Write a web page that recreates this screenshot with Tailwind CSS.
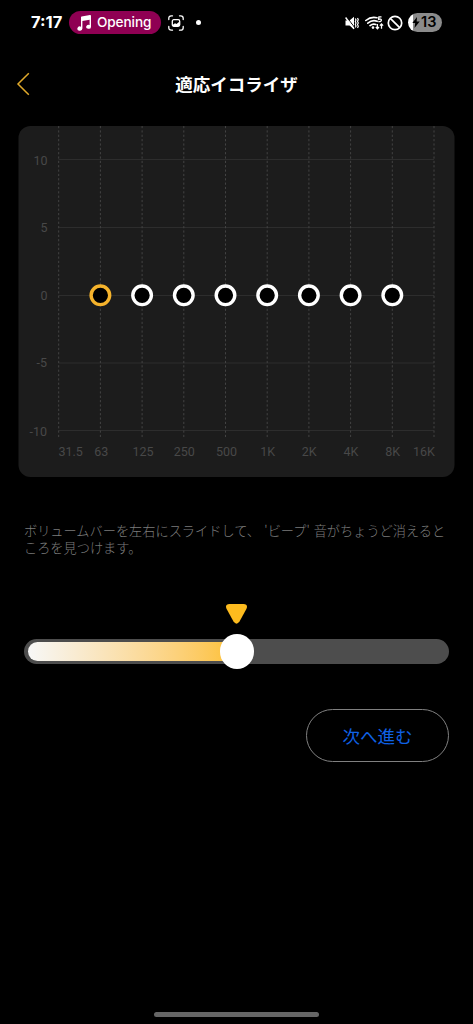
<!DOCTYPE html>
<html lang="ja">
<head>
<meta charset="utf-8">
<meta name="viewport" content="width=device-width, initial-scale=1">
<title>適応イコライザ</title>
<script src="https://cdn.jsdelivr.net/npm/@tailwindcss/browser@4"></script>
</head>
<body class="bg-black">
<div class="flex h-[1024px] w-[473px] flex-col overflow-hidden bg-black font-['Roboto','Noto_Sans_CJK_JP',sans-serif] text-white">

  <!-- Status bar -->
  <div class="flex h-[45px] shrink-0 items-center pl-[31px] pr-[31px]">
    <span class="w-[38px] whitespace-nowrap font-['Inter',sans-serif] text-[16.500px] font-bold leading-none">7:17</span>
    <div class="flex h-[23px] w-[92px] items-center rounded-full bg-[#8f0053] pl-[8px]">
      <svg class="h-[16px] w-[15px] shrink-0" viewBox="0 0 15 16" fill="#fff"><path d="M4 2.200Q4 1.600 4.600 1.500L13 .1Q14 0 14 .9V11.900a2.400 2 0 1 1-1.400-1.900V4.800L5.400 6V13.600a2.500 2.100 0 1 1-1.400-1.900Z"/></svg>
      <span class="ml-[5px] whitespace-nowrap font-['Inter',sans-serif] text-[13.600px] font-medium leading-none tracking-[-0.1px]">Opening</span>
    </div>
    <svg class="ml-[7px] h-[16px] w-[16px] shrink-0" viewBox="0 0 16 16" fill="none" stroke="#fff" stroke-width="1.300" stroke-linecap="round"><path d="M.8 4.500V3.300Q.8.8 3.300.8H4.500M11.500.8h1.200Q15.200.8 15.200 3.300v1.200M15.200 11.500v1.200q0 2.500-2.500 2.500h-1.200M4.500 15.200H3.300Q.8 15.200.8 12.700v-1.200"/><rect x="4.300" y="4.700" width="7.400" height="6.600" rx="1.500"/><path d="M4.500 10 7 8.300 8.500 9l2.800-2.200V11H4.700Z" fill="#fff" stroke="none"/></svg>
    <span class="ml-[12px] size-[5px] rounded-full bg-white"></span>
    <div class="ml-auto flex items-center">
      <svg class="h-[14px] w-[14px]" viewBox="0 0 14 14" fill="none" stroke="#fff" stroke-linejoin="round"><path d="M.5 4.500H4.500L9 .8v12.400L4.500 9.500H.5Z" fill="#fff" stroke="none"/><path d="M1.500.8 10 12" stroke="#000" stroke-width="1"/><path d="M.6 1.500 9 12.800" stroke-width="1.400"/><path d="m10.300 2.500.7 1.500-.7 1.500.7 1.500-.7 1.500.7 1.500-.7 1.500M12.500 2l.8 1.700-.8 1.600.8 1.700-.8 1.600.8 1.700-.8 1.700" stroke-width="1.200"/></svg>
      <svg class="ml-[6px] h-[14px] w-[19px]" viewBox="0 0 19 14"><path d="M.8 4.500Q6 .2 12 1.800M2.800 7.200Q7.500 3.300 12.200 5.300M5 9.600Q8 7.300 10.800 8.500" fill="none" stroke="#fff" stroke-width="1.600" stroke-linecap="round"/><circle cx="8" cy="11.600" r="1.300" fill="#fff"/><path d="M16.500.8H13.900L13.600 3.300Q16.500 2.600 16.400 4.300T13.300 5.500" fill="none" stroke="#fff" stroke-width="1.300"/><path d="M12.400 8v4.500M10.800 11l1.600 1.700L14 11M16.500 12.800V8M14.900 9.600l1.600-1.700 1.600 1.700" fill="none" stroke="#fff" stroke-width="1.300"/></svg>
      <svg class="ml-[3px] h-[16px] w-[16px]" viewBox="0 0 16 16" fill="none" stroke="#fff" stroke-width="1.700"><circle cx="8" cy="8" r="6.700"/><path d="m3.300 3.300 9.400 9.400"/></svg>
      <div class="ml-[5px] flex h-[19px] w-[34px] items-center rounded-full bg-[linear-gradient(90deg,#fff_5px,#8b8b8b_5px)] pl-[4px] text-black">
        <svg class="h-[11px] w-[8px]" viewBox="0 0 8 11" fill="#000"><path d="M5 0 .3 6H3.200L2.500 11 7.700 4.600H4.700Z"/></svg>
        <span class="ml-[1px] font-['Inter',sans-serif] text-[14.500px] font-semibold leading-none">13</span>
      </div>
    </div>
  </div>

  <!-- Title bar -->
  <div class="grid h-[81px] shrink-0 grid-cols-[80px_1fr_80px] items-center pb-[4px]">
    <svg class="ml-[16px] h-[24px] w-[15px]" viewBox="0 0 15 24" fill="none" stroke="#e0a92b" stroke-width="1.500"><path d="M12.800 1.200 2 12 12.800 22.800"/></svg>
    <h1 class="whitespace-nowrap text-center font-['Noto_Sans_CJK_JP',sans-serif] text-[17.500px] font-bold leading-none">適応イコライザ</h1>
  </div>

  <!-- Equalizer chart -->
  <svg class="h-[351px] w-[473px] shrink-0" viewBox="0 126 473 351">
    <rect x="18.500" y="126" width="436" height="351" rx="12" fill="#1c1c1c"/>
    <path d="M58.500 159.500H434M58.500 227.500H434M58.500 295.500H434M58.500 363H434M58.500 430.500H434" stroke="#2d2d2d"/>
    <path d="M58.700 126V438.500M100.400 126V438.500M142.100 126V438.500M183.800 126V438.500M225.500 126V438.500M267.200 126V438.500M308.900 126V438.500M350.600 126V438.500M392.300 126V438.500M434 126V438.500" stroke="#434343" stroke-dasharray="2.200 2.150"/>
    <g class="font-['Roboto',sans-serif] text-[12.500px]" fill="#484848" text-anchor="end">
      <text x="47.500" y="164.500">10</text><text x="47.500" y="232">5</text><text x="47.500" y="300">0</text><text x="47" y="367">-5</text><text x="47" y="435.500">-10</text>
    </g>
    <g class="font-['Roboto',sans-serif] text-[12.500px]" fill="#484848" text-anchor="middle">
      <text x="70.700" y="456">31.5</text><text x="101.200" y="456">63</text><text x="143" y="456">125</text><text x="184.300" y="456">250</text><text x="226.600" y="456">500</text><text x="267.600" y="456">1K</text><text x="309.100" y="456">2K</text><text x="350.900" y="456">4K</text><text x="392.700" y="456">8K</text><text x="424" y="456">16K</text>
    </g>
    <g fill="#000" stroke="#fff" stroke-width="3.400">
      <circle cx="100.400" cy="295.300" r="9.300" stroke="#f5b32c"/>
      <circle cx="142.100" cy="295.300" r="9.300"/><circle cx="183.800" cy="295.300" r="9.300"/><circle cx="225.500" cy="295.300" r="9.300"/><circle cx="267.200" cy="295.300" r="9.300"/><circle cx="308.900" cy="295.300" r="9.300"/><circle cx="350.600" cy="295.300" r="9.300"/><circle cx="392.300" cy="295.300" r="9.300"/>
    </g>
  </svg>

  <!-- Instructions -->
  <p class="ml-[24px] mt-[45px] h-[34px] shrink-0 whitespace-nowrap font-['Noto_Sans_CJK_JP',sans-serif] text-[13.200px] font-light leading-[17px] text-[#7d7d7d]">ボリュームバーを左右にスライドして、<span class="ml-[1.500px]"> 'ビープ' </span><span class="ml-[1px]">音がちょうど消えると</span><br>ころを見つけます。</p>

  <!-- Volume slider -->
  <svg class="ml-[225px] mt-[48px] h-[20px] w-[23px] shrink-0" viewBox="0 0 23 20" fill="#fdbb1e"><path d="M4.500 0H18.500Q23.300.3 21.500 4.800L14.500 17.500Q11.500 21.800 8.500 17.500L1.500 4.800Q-.3.300 4.500 0Z"/></svg>
  <div class="ml-[24px] mt-[10px] flex h-[35px] w-[425px] shrink-0 items-center">
    <div class="flex h-[25px] w-full items-center rounded-full bg-[#4d4d4d] pl-[3.500px]">
      <div class="h-[19px] w-[209px] shrink-0 rounded-l-full bg-linear-to-r from-[#f7f7f7] to-[#fdc02c]"></div>
      <div class="-ml-[17px] size-[34.500px] shrink-0 rounded-full bg-white"></div>
    </div>
  </div>

  <!-- Next button -->
  <button class="ml-[306px] mt-[40px] flex h-[53px] w-[143px] shrink-0 items-center justify-center rounded-full border-[1.500px] border-[#808080] font-['Noto_Sans_CJK_JP',sans-serif] text-[17.500px] font-normal leading-none text-[#0f62e6]">次へ進む</button>

  <!-- Home indicator -->
  <div class="mx-auto mb-[7px] mt-auto h-[5px] w-[165px] shrink-0 rounded-full bg-[#666]"></div>
</div>
</body>
</html>
